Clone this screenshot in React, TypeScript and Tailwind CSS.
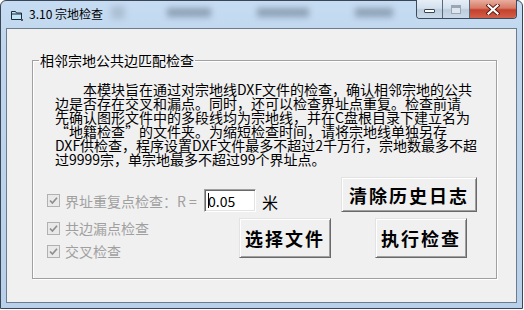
import type { ReactNode } from "react";

const lines = [
  "本模块旨在通过对宗地线DXF文件的检查，确认相邻宗地的公共",
  "边是否存在交叉和漏点。同时，还可以检查界址点重复。检查前请",
  "先确认图形文件中的多段线均为宗地线，并在C盘根目录下建立名为",
  "“地籍检查”的文件夹。为缩短检查时间，请将宗地线单独另存",
  "DXF供检查，程序设置DXF文件最多不超过2千万行，宗地数最多不超",
  "过9999宗，单宗地最多不超过99个界址点。",
];

function Check() {
  return (
    <span className="flex h-[13px] w-[13px] shrink-0 items-center justify-center border border-[#b1b1b1] bg-[#e9e9e9]" aria-hidden>
      <svg width="9" height="9" viewBox="0 0 9 9">
        <path d="M1 4.5 L3.4 7 L8 1.8" stroke="#8e8e8e" strokeWidth="1.7" fill="none" />
      </svg>
    </span>
  );
}

function Btn({ children, className }: { children: ReactNode; className: string }) {
  return (
    <button
      type="button"
      className={`flex shrink-0 items-center justify-center border border-[#e3e3e3] border-r-[#696969] border-b-[#696969] bg-[#f0f0f0] text-[18px] font-bold leading-none tracking-[2px] text-black shadow-[inset_1px_1px_0_#fff,inset_-1px_-1px_0_#a0a0a0] ${className}`}
    >
      {children}
    </button>
  );
}

export default function App() {
  return (
    <div className="h-[310px] w-[524px] bg-white font-['Noto_Sans_CJK_SC',sans-serif]">
      <div className="flex h-[309px] w-[523px] flex-col rounded-t-[6px] border border-[#3a4655] bg-[linear-gradient(180deg,#c6dcf2_0%,#bfd6ee_15%,#b8d0e9_100%)] px-[5px] pb-[5px]">
        {/* title bar, with the blurred window behind the glass */}
        <div className="flex h-[27px] shrink-0 items-start">
          <svg className="ml-[4px] mt-[9px]" width="13" height="11" viewBox="0 0 13 11" aria-hidden>
            <path d="M1.5 1.5h4l1 1.5h5v6.5h-10z" fill="#bfe7f6" stroke="#1c2b3b" />
            <path d="M1.5 4h10" stroke="#1c2b3b" />
            <rect x="11" y="9" width="2" height="2" fill="#556" />
          </svg>
          <span className="ml-[6px] mt-[5px] text-[12px] leading-[16px] text-black">3.10 宗地检查</span>
          <span className="ml-[8px] mt-[5px] h-[13px] w-[14px] bg-[#8898a8] opacity-40 blur-[3px]" />
          <span className="ml-[42px] mt-[7px] h-[9px] w-[44px] bg-[#56677a] opacity-50 blur-[3px]" />
          <span className="ml-[46px] mt-[7px] h-[9px] w-[52px] bg-[#56677a] opacity-50 blur-[3px]" />
          <span className="ml-[46px] mt-[7px] h-[9px] w-[38px] bg-[#56677a] opacity-50 blur-[3px]" />
          <div className="ml-auto -mt-px flex h-[19px] overflow-hidden rounded-b-[4px] border border-t-0 border-[#3b4a5c]">
            <div className="flex w-[26px] items-end justify-center border-r border-[#5a6878] bg-[linear-gradient(180deg,#e6eef7_0%,#d3e0ee_45%,#bccdde_55%,#cbdaea_100%)] pb-[5px]">
              <span className="h-[4px] w-[11px] rounded-[1px] border border-[#3a4452] bg-white" />
            </div>
            <div className="flex w-[27px] items-center justify-center border-r border-[#5a6878] bg-[linear-gradient(180deg,#e6eef7_0%,#d3e0ee_45%,#bccdde_55%,#cbdaea_100%)]">
              <span className="h-[9px] w-[10px] border border-[#9aa6b4] bg-[#dde6ef] shadow-[inset_0_2px_0_#9aa6b4]" />
            </div>
            <div className="flex w-[46px] items-center justify-center bg-[linear-gradient(180deg,#e8ad9f_0%,#d77a66_45%,#c4412c_55%,#d2604a_100%)]">
              <svg width="14" height="11" viewBox="0 0 14 11" aria-hidden>
                <path d="M2.5 1.5 L11.5 9.5 M11.5 1.5 L2.5 9.5" stroke="#5b1a12" strokeWidth="4" strokeLinecap="square" />
                <path d="M2.5 1.5 L11.5 9.5 M11.5 1.5 L2.5 9.5" stroke="#fff" strokeWidth="2.2" strokeLinecap="square" />
              </svg>
            </div>
          </div>
        </div>

        {/* client area */}
        <div className="flex flex-1 flex-col border border-[#6b7c8d] bg-[#f0f0f0]">
          <fieldset className="ml-[25px] mr-[29px] mt-[23px] border border-[#a0a0a0] shadow-[1px_1px_0_#fff,inset_1px_1px_0_#fff]">
            <legend className="ml-[6px] px-[1px] text-[14px] leading-[16px] text-black">相邻宗地公共边匹配检查</legend>
            <div className="flex flex-col pb-[17px] pl-[14px] pr-[19px] pt-[14px]">
              <div className="pl-[8px] text-[14px] leading-[14px] text-black">
                {lines.map((l, i) => (
                  <div key={i} className={`whitespace-nowrap ${i === 0 ? "pl-[28px]" : ""}`}>
                    {l}
                  </div>
                ))}
              </div>

              <div className="mt-[11px] flex items-end">
                <div className="flex h-[23px] items-center">
                  <Check />
                  <span className="ml-[5px] w-[139px] whitespace-nowrap text-[14px] leading-[16px] text-[#a0a0a0]">
                    界址重复点检查：R =
                  </span>
                  <div className="flex h-[23px] w-[52px] items-center border border-[#a0a0a0] border-r-white border-b-white bg-white pl-[3px] shadow-[inset_1px_1px_0_#696969,inset_-1px_-1px_0_#e3e3e3]">
                    <span className="h-[15px] w-px bg-black" />
                    <span className="-ml-px text-[14px] leading-[16px] text-black">0.05</span>
                  </div>
                  <span className="ml-[6px] mt-[3px] text-[16px] leading-[20px] text-black">米</span>
                </div>
                <Btn className="ml-auto h-[35px] w-[136px]">清除历史日志</Btn>
              </div>

              <div className="mt-[6px] flex items-start">
                <div className="flex w-[192px] flex-col gap-[3px]">
                  <div className="flex h-[20px] items-center">
                    <Check />
                    <span className="ml-[5px] text-[14px] leading-[16px] text-[#a0a0a0]">共边漏点检查</span>
                  </div>
                  <div className="flex h-[20px] items-center">
                    <Check />
                    <span className="ml-[5px] text-[14px] leading-[16px] text-[#a0a0a0]">交叉检查</span>
                  </div>
                </div>
                <Btn className="h-[40px] w-[92px]">选择文件</Btn>
                <Btn className="ml-[44px] h-[40px] w-[92px]">执行检查</Btn>
              </div>
            </div>
          </fieldset>
        </div>
      </div>
    </div>
  );
}
